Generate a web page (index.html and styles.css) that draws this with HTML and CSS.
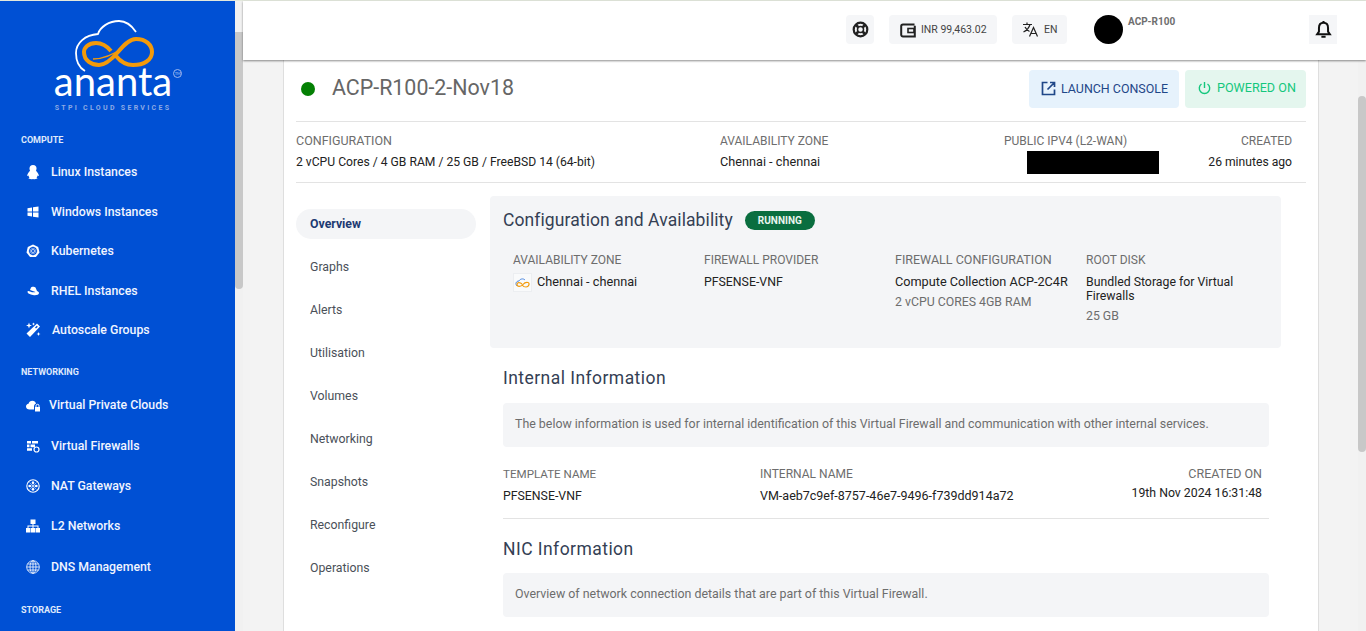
FILE: index.html
```html
<!DOCTYPE html>
<html>
<head>
	<meta charset="utf-8">
	<title>ACP-R100-2-Nov18</title>
	<link rel="stylesheet" href="styles.css">
</head>
<body>
	<div class="topline"></div>
	<div class="app">
		<aside class="sidebar">
			<div class="logo">
				<svg class="logo_mark" width="90" height="56" viewBox="0 0 90 56">
					<path d="M12 51C5 47 3 40 3 33 3 23 12 15 25 14 27 7 36 1 46 1 53 1 59 6 63 12" fill="none" stroke="#fff" stroke-width="1.800"/>
					<path d="M38 31C33 25 28 23 23 23 15 23 11 28 11 32 11 41 19 45 26 45 33 45 39 39 45 32 50 26 56 19 63 19 73 19 79 25 79 32 79 40 71 45 60 45 52 45 47 41 43 36" fill="none" stroke="#f39a0a" stroke-width="4"/>
					<path d="M20 39C30 39 40 35 51 27" fill="none" stroke="#f39a0a" stroke-width="1.500"/>
				</svg>
				<div class="logo_name">ananta<span class="logo_tm">TM</span></div>
				<div class="logo_sub">STPI CLOUD SERVICES</div>
			</div>

			<div class="nav_title first">COMPUTE</div>
			<a class="side_item"><svg width="14" height="16" viewBox="0 0 14 16"><circle cx="7" cy="4.500" r="3.500" fill="#fff"/><path fill="#fff" d="M4.500 6C3 8 1.500 9.500 1 12L2.500 11.500C2.500 12.500 3 13.300 3.500 14H2.500C2.500 15 5 15.500 7 15 9 15.500 11.500 15 11.500 14H10.500C11 13.300 11.500 12.500 11.500 11.500L13 12C12.500 9.500 11 8 9.500 6Z"/></svg><span>Linux Instances</span></a>
			<a class="side_item"><svg width="14" height="14" viewBox="0 0 14 14"><path fill="#fff" d="M1.500 3.200 6 2.500V6.600H1.500ZM7 2.300 12.500 1.500V6.600H7ZM1.500 7.600H6V11.500L1.500 10.800ZM7 7.600H12.500V12.500L7 11.700Z"/></svg><span>Windows Instances</span></a>
			<a class="side_item"><svg width="14" height="14" viewBox="0 0 14 14"><path fill="#fff" d="M7 .5 12.200 3 13.500 8.600 9.900 13H4.100L.5 8.600 1.800 3Z"/><circle cx="7" cy="7" r="3.300" fill="none" stroke="#0050d4" stroke-width="1.200"/><path d="M7 2.500V11.500M2.700 7H11.300M4 4 10 10M10 4 4 10" stroke="#0050d4" stroke-width=".7"/></svg><span>Kubernetes</span></a>
			<a class="side_item"><svg width="14" height="14" viewBox="0 0 14 14"><path fill="#fff" d="M4 6 5 3.500C5.500 2.500 8.500 2.500 9.500 3.500L11 7C12.500 7.500 13 8.300 13 9C13 11 9.500 11.500 7 11C4 10.500 1 9 1.500 7.500 1.800 6.800 3 6.800 4 7.500 6 8.500 9 8.500 9.500 8Z"/></svg><span>RHEL Instances</span></a>
			<a class="side_item wand"><svg width="16" height="16" viewBox="0 0 16 16"><path fill="#fff" d="M12 1.500 15 4.500 5 15 1.500 11.500ZM11.800 3.800 10 5.600 11 6.600 12.800 4.800ZM4 .5 4.800 2.700 7 3.500 4.800 4.300 4 6.500 3.200 4.300 1 3.500 3.200 2.700ZM8.500 .5 9 1.500 10 2 9 2.500 8.500 3.500 8 2.500 7 2 8 1.500ZM13.500 10 14.100 11.400 15.500 12 14.100 12.600 13.500 14 12.900 12.600 11.500 12 12.900 11.400Z"/></svg><span>Autoscale Groups</span></a>

			<div class="nav_title">NETWORKING</div>
			<a class="side_item net vpc"><svg width="14" height="14" viewBox="0 0 14 14"><path fill="#fff" d="M3.500 11.500C1.500 11.500 0 10.200 0 8.500 0 7 1 6 2.500 5.700 3 3.800 4.500 2.800 6.300 2.800 8.200 2.800 9.700 4 10 5.700 8.800 6 8 7 8 8.500V11.500Z"/><path fill="#fff" d="M9 9H14V13.500H9Z"/><path fill="none" stroke="#fff" d="M10 9V7.800A1.500 1.500 0 0 1 13 7.800V9"/></svg><span>Virtual Private Clouds</span></a>
			<a class="side_item net"><svg width="14" height="14" viewBox="0 0 14 14"><path fill="#fff" d="M1 2H5V4.600H1ZM6 2H12V4.600H6ZM1 5.600H3.500V8.200H1ZM4.500 5.600H9V8.200H4.500ZM1 9.200H6V11.800H1Z"/><circle cx="10.500" cy="10.500" r="2.500" fill="none" stroke="#fff" stroke-width="1.200"/></svg><span>Virtual Firewalls</span></a>
			<a class="side_item net"><svg width="14" height="14" viewBox="0 0 14 14"><circle cx="7" cy="7" r="6.200" fill="none" stroke="#fff" stroke-width="1.100"/><path d="M7 2V12M2 7H12M3.500 3.500 10.500 10.500M10.500 3.500 3.500 10.500" stroke="#fff" stroke-width=".5"/><circle cx="7" cy="3.800" r="1.300" fill="#fff"/><circle cx="7" cy="10.200" r="1.300" fill="#fff"/><circle cx="3.800" cy="7" r="1.300" fill="#fff"/><circle cx="10.200" cy="7" r="1.300" fill="#fff"/></svg><span>NAT Gateways</span></a>
			<a class="side_item net"><svg width="14" height="14" viewBox="0 0 14 14"><path fill="#fff" d="M4.500 .5H9.500V5H7.500V6.500H12.500V9H14V13.500H9.500V9H11.500V7.500H7.500V9H9V13.500H5V9H6.500V7.500H2.500V9H4.500V13.500H0V9H1.500V6.500H6.500V5H4.500Z"/></svg><span>L2 Networks</span></a>
			<a class="side_item net"><svg width="14" height="14" viewBox="0 0 14 14"><g fill="none" stroke="#fff" stroke-width=".8"><circle cx="7" cy="7" r="6.300"/><ellipse cx="7" cy="7" rx="3" ry="6.300"/><path d="M7 .7V13.300M.7 7H13.300M1.500 4H12.500M1.500 10H12.500"/></g></svg><span>DNS Management</span></a>

			<div class="nav_title storage">STORAGE</div>
		</aside>
		<div class="side_scroll"><div class="side_thumb"></div></div>

		<div class="main">
			<header class="topbar">
				<div class="chip square"><svg width="17" height="17" viewBox="0 0 17 17"><circle cx="8.500" cy="8.500" r="6.800" fill="none" stroke="#222" stroke-width="2.200"/><circle cx="8.500" cy="8.500" r="3" fill="none" stroke="#222" stroke-width="1.500"/><path d="M4 4 6.500 6.500M13 4 10.500 6.500M4 13 6.500 10.500M13 13 10.500 10.500" stroke="#222" stroke-width="2.600"/></svg></div>
				<div class="chip wallet"><svg width="16" height="16" viewBox="0 0 16 16"><path d="M14.500 2.500H3A1.800 1.800 0 0 0 1.200 4.300V12.700A1.800 1.800 0 0 0 3 14.500H14.800V3.800" fill="none" stroke="#222" stroke-width="2"/><rect x="8" y="6.500" width="6" height="4" fill="none" stroke="#222" stroke-width="1.600"/></svg><span>INR 99,463.02</span></div>
				<div class="chip lang"><svg width="17" height="17" viewBox="0 0 17 17"><path d="M1 3.500H10M5 1.500V3.500M8 3.500C7 7 4.500 9.500 1.500 11M3 6C4 8 5.500 9.500 7.500 10.500M7.500 15.500 11.500 6.500 15.500 15.500M9 12.500H14" fill="none" stroke="#222" stroke-width="1.200"/></svg><span>EN</span></div>
				<div class="avatar"></div>
				<div class="user_name">ACP-R100</div>
				<div class="chip bell"><svg width="17" height="19" viewBox="0 0 16 18"><path d="M8 2.500C5 2.500 3.700 4.800 3.700 7.500V11L2 13.500H14L12.300 11V7.500C12.300 4.800 11 2.500 8 2.500Z" fill="none" stroke="#111" stroke-width="1.900"/><path d="M6 15.800H10M8 1V2.500" stroke="#111" stroke-width="1.900"/></svg></div>
			</header>

			<div class="page_row">
				<div class="page">
					<div class="card">
						<div class="title_row">
							<span class="dot"></span>
							<h1 class="title">ACP-R100-2-Nov18</h1>
							<a class="btn console"><svg width="15" height="15" viewBox="0 0 15 15"><path d="M6.500 1.500H1.500V13.500H13.500V8.500M9 1.500H13.500V6M13.500 1.500 6.500 8.500" fill="none" stroke="#1f4788" stroke-width="1.700"/></svg>LAUNCH CONSOLE</a>
							<a class="btn power"><svg width="13" height="14" viewBox="0 0 13 14"><path d="M6.500 1V7M3.500 3A5.200 5.200 0 1 0 9.500 3" fill="none" stroke="#14c77d" stroke-width="1.400"/></svg>POWERED ON</a>
						</div>

						<div class="info_row">
							<div class="info_a">
								<div class="lbl wide">CONFIGURATION</div>
								<div class="val tight">2 vCPU Cores / 4 GB RAM / 25 GB / FreeBSD 14 (64-bit)</div>
							</div>
							<div class="info_b">
								<div class="lbl">AVAILABILITY ZONE</div>
								<div class="val wide">Chennai - chennai</div>
							</div>
							<div class="info_c">
								<div class="lbl">PUBLIC IPV4 (L2-WAN)</div>
								<div class="redacted"></div>
							</div>
							<div class="info_d">
								<div class="lbl">CREATED</div>
								<div class="val tight">26 minutes ago</div>
							</div>
						</div>

						<div class="body_row">
							<nav class="tabs">
								<a class="tab active">Overview</a>
								<a class="tab">Graphs</a>
								<a class="tab">Alerts</a>
								<a class="tab">Utilisation</a>
								<a class="tab">Volumes</a>
								<a class="tab">Networking</a>
								<a class="tab">Snapshots</a>
								<a class="tab">Reconfigure</a>
								<a class="tab">Operations</a>
							</nav>

							<div class="content">
								<section class="panel">
									<div class="panel_head">
										<h2 class="heading">Configuration and Availability</h2>
										<span class="badge">RUNNING</span>
									</div>
									<div class="panel_cols">
										<div>
											<div class="lbl">AVAILABILITY ZONE</div>
											<div class="val zone wide">
												<svg class="zone_icon" width="19" height="19" viewBox="0 0 19 19"><rect x=".5" y=".5" width="18" height="18" fill="#f9fafb" stroke="#eceef1"/><path d="M4 13C2 11 3 8 6 8C7 6 10 5 12 7" fill="none" stroke="#4a86e0"/><path d="M9 11C7 9 4 9 4 11.500S8 14 10 11.500 13 9 15 9.500 16 14 13 14 10 13 9 11.500" fill="none" stroke="#f39a0a" stroke-width="1.200"/></svg>
												<span>Chennai - chennai</span>
											</div>
										</div>
										<div>
											<div class="lbl">FIREWALL PROVIDER</div>
											<div class="val">PFSENSE-VNF</div>
										</div>
										<div>
											<div class="lbl wide">FIREWALL CONFIGURATION</div>
											<div class="val wide">Compute Collection ACP-2C4R</div>
											<div class="sub">2 vCPU CORES 4GB RAM</div>
										</div>
										<div>
											<div class="lbl">ROOT DISK</div>
											<div class="val disk">Bundled Storage for Virtual Firewalls</div>
											<div class="sub disk_size">25 GB</div>
										</div>
									</div>
								</section>

								<section class="block">
									<h2 class="heading">Internal Information</h2>
									<div class="note">The below information is used for internal identification of this Virtual Firewall and communication with other internal services.</div>
									<div class="meta_row">
										<div class="meta_a">
											<div class="lbl narrow">TEMPLATE NAME</div>
											<div class="val">PFSENSE-VNF</div>
										</div>
										<div class="meta_b">
											<div class="lbl">INTERNAL NAME</div>
											<div class="val mono_id">VM-aeb7c9ef-8757-46e7-9496-f739dd914a72</div>
										</div>
										<div class="meta_c">
											<div class="lbl wide">CREATED ON</div>
											<div class="val">19th Nov 2024 16:31:48</div>
										</div>
									</div>
								</section>

								<section class="block nic">
									<h2 class="heading">NIC Information</h2>
									<div class="note">Overview of network connection details that are part of this Virtual Firewall.</div>
								</section>
							</div>
						</div>
					</div>
				</div>
				<div class="page_scroll"><div class="page_thumb"></div></div>
			</div>
		</div>
	</div>
</body>
</html>
```

FILE: styles.css
```css
* {
	box-sizing: border-box;
}

html, body {
	margin: 0;
	height: 631px;
	overflow: hidden;
}

body {
	background: #f3f3f3;
	font-family: "Roboto", "Liberation Sans", sans-serif;
	font-size: 12px;
	color: #222;
}

.topline {
	height: 1px;
	background: #e3e8dc;
}

.app {
	display: flex;
	height: 630px;
}

.sidebar {
	width: 235px;
	flex: none;
	background: #0050d4;
	color: #f1f5ff;
	padding-top: 19px;
	overflow: hidden;
}

.logo {
	display: flex;
	flex-direction: column;
	align-items: center;
	height: 95px;
}

.logo_mark {
	display: block;
	flex: none;
}

.logo_name {
	font-family: "Lato", sans-serif;
	font-size: 40px;
	line-height: 28px;
	color: #fff;
	margin-top: -9px;
	margin-right: 9px;
	position: relative;
}

.logo_tm {
	position: absolute;
	top: 2px;
	right: -10px;
	font-size: 4px;
	line-height: 7px;
	width: 9px;
	height: 9px;
	border: 1px solid #9db8ee;
	border-radius: 50%;
	text-align: center;
	color: #b9cdf5;
}

.logo_sub {
	font-size: 7px;
	line-height: 8px;
	font-weight: 700;
	letter-spacing: 2.3px;
	color: #8daae4;
	margin-top: 8.5px;
	margin-right: 9px;
	white-space: nowrap;
}

.nav_title {
	font-size: 9px;
	font-weight: 700;
	color: #dfe8fb;
	padding-left: 21px;
	line-height: 12px;
	margin-top: 16px;
	margin-bottom: 7px;
}

.nav_title.first {
	margin-top: 19px;
	margin-bottom: 6.5px;
}

.nav_title.storage {
	margin-top: 17px;
}

.side_item {
	display: flex;
	align-items: center;
	height: 39.5px;
	padding-left: 25px;
	font-size: 12.3px;
	font-weight: 500;
}

.side_item svg {
	flex: none;
	width: 16px;
	margin-right: 10px;
}

.side_item.wand svg {
	margin-right: 11px;
}

.side_item.net {
	height: 40.4px;
}

.side_item.vpc svg {
	margin-right: 8px;
}

.side_scroll {
	width: 8px;
	flex: none;
	background: #f1f1f1;
	padding-top: 31px;
}

.side_thumb {
	height: 257px;
	background: #c8c8c8;
	border-radius: 0 0 4px 4px;
}

.main {
	flex: 1;
	min-width: 0;
	display: flex;
	flex-direction: column;
}

.topbar {
	height: 59px;
	flex: none;
	background: #fff;
	box-shadow: 0 1px 2px rgba(0, 0, 0, .45);
	display: flex;
	align-items: flex-start;
	padding: 14px 29px 0 603px;
	position: relative;
	z-index: 2;
}

.chip {
	height: 29px;
	background: #f5f6f8;
	border-radius: 4px;
	display: flex;
	align-items: center;
	font-size: 10.5px;
	color: #444;
}

.chip.square {
	width: 28px;
	justify-content: center;
}

.chip.wallet {
	width: 108px;
	margin-left: 15px;
	padding-left: 11px;
	gap: 5px;
}

.chip.lang {
	width: 55px;
	margin-left: 15px;
	padding-left: 10px;
	gap: 5px;
}

.avatar {
	width: 29px;
	height: 29px;
	border-radius: 50%;
	background: #000;
	margin-left: 27px;
}

.user_name {
	font-size: 10px;
	font-weight: 700;
	color: #6f6f6f;
	margin-left: 5px;
	margin-top: 1px;
}

.chip.bell {
	width: 28px;
	justify-content: center;
	margin-left: auto;
	border-radius: 0;
}

.page_row {
	flex: 1;
	min-height: 0;
	display: flex;
}

.page {
	flex: 1;
	min-width: 0;
	padding: 0 39px 0 40px;
	overflow: hidden;
}

.page_scroll {
	width: 8px;
	flex: none;
	background: #f1f1f1;
	padding-top: 36px;
}

.page_thumb {
	height: 356px;
	background: #c8c8c8;
	border-radius: 4px;
}

.card {
	height: 600px;
	background: #fff;
	border: 1px solid #dedede;
	border-width: 0 1px;
	padding: 1px 12px 0 12px;
}

.title_row {
	height: 61px;
	display: flex;
	align-items: center;
	border-bottom: 1px solid #e3e3e3;
	padding: 0 0 5px 5px;
}

.dot {
	width: 14px;
	height: 14px;
	border-radius: 50%;
	background: #048004;
}

.title {
	margin: 0 0 0 17px;
	font-size: 21.400px;
	font-weight: 400;
	color: #666;
	flex: 1;
	padding-bottom: 2px;
}

.btn {
	height: 38px;
	border-radius: 4px;
	display: flex;
	align-items: center;
}

.btn.console {
	width: 150px;
	padding-left: 12px;
	gap: 5px;
	background: #e6f2fc;
	color: #1f4788;
	font-size: 12.450px;
}

.btn.power {
	width: 121px;
	margin-left: 6px;
	padding: 0 0 2px 13px;
	gap: 6px;
	background: #e4f6ee;
	color: #14c77d;
	font-size: 12.600px;
}

.info_row {
	height: 61px;
	border-bottom: 1px solid #e3e3e3;
	display: flex;
	padding: 11px 14px 0 0;
}

.lbl {
	color: #6d6d6d;
	line-height: 16px;
}

.lbl.wide {
	font-size: 12.500px;
}

.lbl.narrow {
	font-size: 11.600px;
}

.val {
	color: #222;
	font-size: 12.300px;
	line-height: 16px;
	margin-top: 5px;
}

.val.tight {
	font-size: 12.150px;
}

.val.wide {
	font-size: 12.700px;
}

.val.mono_id {
	font-size: 12.500px;
}

.info_a {
	width: 424px;
	flex: none;
}

.info_b {
	width: 284px;
	flex: none;
}

.info_c {
	flex: 1;
}

.info_d {
	text-align: right;
}

.redacted {
	width: 132px;
	height: 23px;
	background: #000;
	margin: 2px 0 0 23px;
}

.body_row {
	display: flex;
	padding-top: 13px;
}

.tabs {
	width: 180px;
	flex: none;
	padding-top: 13px;
	display: flex;
	flex-direction: column;
	gap: 13px;
}

.tab {
	height: 30px;
	line-height: 31px;
	padding-left: 14px;
	border-radius: 15px;
	font-size: 12.300px;
	color: #4a5058;
}

.tab.active {
	background: #f4f5f7;
	color: #1c3a72;
	font-weight: 700;
}

.content {
	width: 791px;
	margin-left: 14px;
	flex: none;
}

.panel {
	height: 152px;
	background: #f4f5f7;
	border-radius: 4px;
	padding: 13px 13px 0;
}

.panel_head {
	display: flex;
	align-items: center;
	height: 22px;
}

.heading {
	margin: 0;
	font-size: 17.500px;
	font-weight: 400;
	line-height: 22px;
	letter-spacing: .45px;
	color: #344054;
}

.panel .heading {
	letter-spacing: .1px;
}

.badge {
	width: 70px;
	height: 19px;
	line-height: 19px;
	border-radius: 10px;
	background: #0a6e3f;
	color: #e8f5ee;
	font-size: 10px;
	font-weight: 700;
	text-align: center;
	margin-left: 12px;
}

.panel_cols {
	display: grid;
	grid-template-columns: repeat(4, 191px);
	padding: 21px 0 0 10px;
}

.panel_cols .val {
	margin-top: 6px;
}

.sub {
	color: #6d6d6d;
	font-size: 12.300px;
	line-height: 16px;
	margin-top: 4px;
}

.panel_cols .val.zone {
	display: flex;
	align-items: center;
	gap: 5px;
	margin-top: 5px;
}

.zone span {
	margin-top: -2px;
}

.zone_icon {
	flex: none;
}

.panel_cols .val.disk {
	line-height: 14px;
	width: 170px;
	margin-top: 7px;
}

.sub.disk_size {
	margin-top: 5px;
}

.block {
	padding: 19px 12px 0 13px;
}

.note {
	height: 44px;
	line-height: 42px;
	background: #f4f5f7;
	border-radius: 4px;
	padding-left: 12px;
	margin-top: 14px;
	color: #6d6d6d;
	font-size: 12.400px;
}

.meta_row {
	display: flex;
	border-bottom: 1px solid #e3e3e3;
	height: 72px;
	padding: 19px 7px 0 0;
}

.meta_a {
	width: 257px;
	flex: none;
}

.meta_b {
	flex: 1;
}

.meta_a .val, .meta_b .val {
	margin-top: 6px;
}

.meta_c {
	text-align: right;
}

.meta_c .val {
	margin-top: 3px;
}

.nic {
	padding-top: 19px;
}

.nic .note {
	margin-top: 13px;
}
```
